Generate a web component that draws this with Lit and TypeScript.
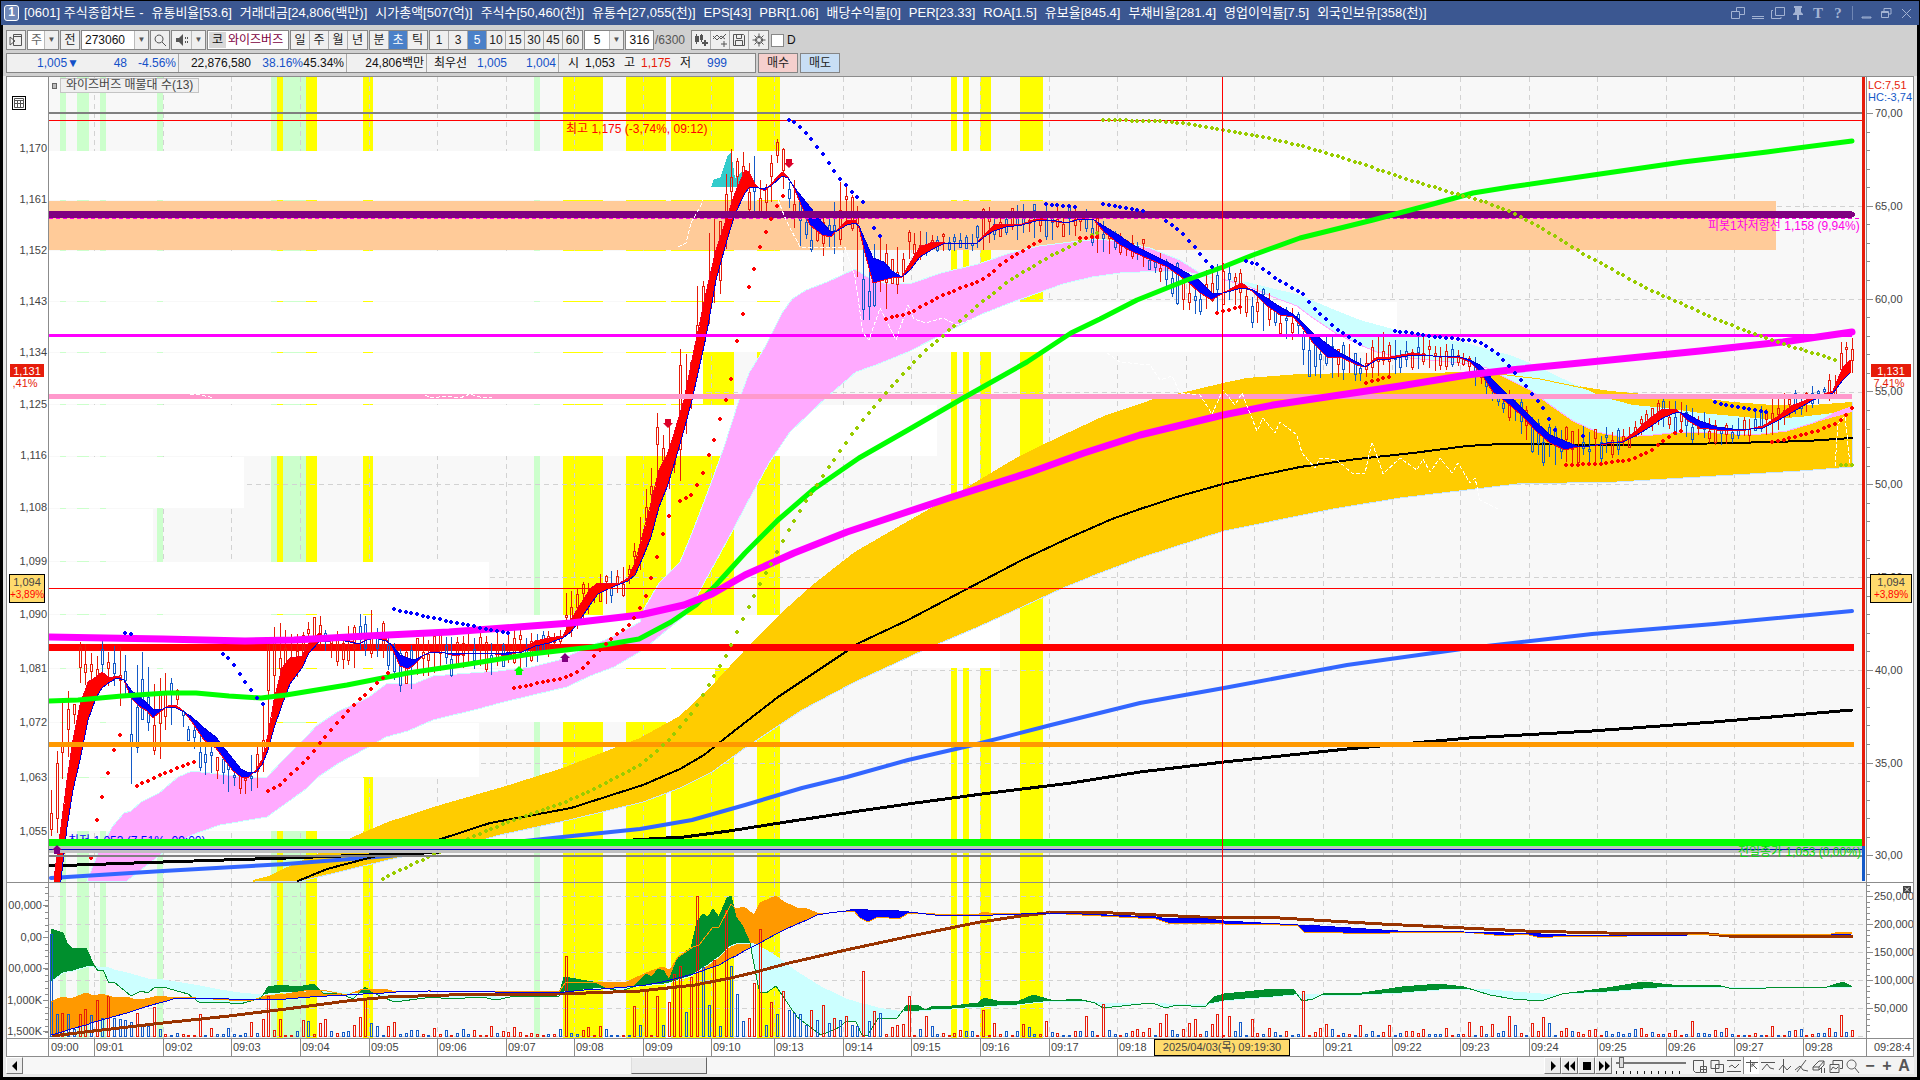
import { LitElement, html, svg, css } from "lit";
import { customElement } from "lit/decorators.js";

type Row = number[];
const rows = (s: string): Row[] => s.trim().split(/\s+/).map((p) => p.split(",").map(Number));
const poly = (s: string) => "M" + s.trim().split(/\s+/).join("L");

/** Linear interpolation of column `c` of a table sorted by its first column. */
const at = (t: Row[], x: number, c = 1): number => {
  if (x <= t[0][0]) return t[0][c];
  for (let i = 1; i < t.length; i++) {
    if (x <= t[i][0]) {
      const a = t[i - 1], b = t[i];
      return a[c] + ((b[c] - a[c]) * (x - a[0])) / (b[0] - a[0] || 1);
    }
  }
  return t[t.length - 1][c];
};

/** Columns where series 1 runs above (sign 1) or below (sign -1) series 2. */
const ribbon = (t: Row[], sign: number): string => {
  let d = "";
  for (let x = Math.ceil(t[0][0]); x <= t[t.length - 1][0]; x++) {
    const a = at(t, x, 1), b = at(t, x, 2);
    if ((b - a) * sign > 0.8) d += `M${x + 0.5},${Math.round(a)}V${Math.round(b)}`;
  }
  return d;
};
const trace = (t: Row[], c: number) => "M" + t.map((r) => `${r[0]},${r[c]}`).join("L");
const noise = (i: number) => {
  const v = Math.sin(i * 127.1 + 11.7) * 43758.5453;
  return v - Math.floor(v);
};

const STEP = 5.718;
const BARS = 316;
const barX = (i: number) => Math.round(51 + i * STEP);

const METRICS = ["[0601] 주식종합차트 -", "유통비율[53.6]", "거래대금[24,806(백만)]", "시가총액[507(억)]", "주식수[50,460(천)]", "유통수[27,055(천)]", "EPS[43]", "PBR[1.06]", "배당수익률[0]", "PER[23.33]", "ROA[1.5]", "유보율[845.4]", "부채비율[281.4]", "영업이익률[7.5]", "외국인보유[358(천)]"];

const GRID_X = [94, 163, 231, 300, 369, 437, 506, 574, 643, 711, 774, 843, 911, 980, 1049, 1117, 1186, 1254, 1323, 1392, 1460, 1529, 1597, 1666, 1734, 1803];
const TIMES = ["09:01", "09:02", "09:03", "09:04", "09:05", "09:06", "09:07", "09:08", "09:09", "09:10", "09:13", "09:14", "09:15", "09:16", "09:17", "09:18", "", "", "09:21", "09:22", "09:23", "09:24", "09:25", "09:26", "09:27", "09:28"];
const GREEN_STRIPES = rows("60,66 77,89 100,106 157,163 271,277 283,306 534,540");
const YELLOW_STRIPES = rows("277,283 306,317 363,373 563,603 626,666 671,734 757,780 951,957 963,969 980,991 1020,1043");
/** top, bottom, right edge of each volume-at-price band */
const PROFILE = rows("151,200,1350 251,301,843 302,352,1397 353,404,703 405,456,937 457,508,244 509,561,153 562,614,489 615,668,1000 669,722,715 723,777,479 778,831,364");
const PRICE_LABELS: [string, number][] = [["1,170", 147], ["1,161", 198], ["1,152", 249], ["1,143", 300], ["1,134", 351], ["1,125", 403], ["1,116", 454], ["1,108", 506], ["1,099", 560], ["1,090", 613], ["1,081", 667], ["1,072", 721], ["1,063", 776], ["1,055", 830]];

const PINK_CLOUD = "87,881 98,853 112,827 124,813 131,811 141,802 159,793 178,777 192,771 245,777 267,777 282,761 308,735 316,726 337,712 369,697 386,684 416,683 433,676 457,674 498,671 531,667 559,660 588,647 612,637 640,622 645,607 659,583 680,562 692,533 702,507 714,475 724,447 739,400 749,373 765,347 782,313 792,299 806,290 827,282 855,269 871,279 884,283 912,283 941,273 978,264 1010,253 1039,246 1071,242 1100,239 1127,243 1150,248 1180,260 1200,273 1213,278 1187,272 1160,271 1120,273 1092,277 1063,284 1010,303 982,314 945,333 908,352 876,365 856,372 827,397 790,432 769,463 745,507 733,530 704,583 688,613 667,630 643,650 614,667 590,676 567,687 533,695 500,703 478,709 433,720 408,731 386,737 367,748 339,763 318,777 306,789 267,817 220,825 192,835 169,848 127,881";
const CYAN_TOP = "1213,278 1247,282 1267,287 1300,295 1330,308 1360,320 1393,329 1427,337 1467,343 1493,351 1510,355 1530,363 1557,376 1583,388 1603,397 1633,405 1667,408 1700,413 1767,419 1800,417 1833,413";
const CYAN_BOTTOM = "1833,415 1813,423 1787,431 1753,435 1717,433 1680,432 1653,435 1623,437 1597,432 1573,421 1553,407 1530,390 1500,375 1487,368 1470,364 1400,357 1377,352 1360,345 1337,334 1313,318 1297,306 1273,297 1250,287 1222,279";
const GOLD_TOP = "253,881 269,877 294,865 322,853 353,838 388,823 437,807 506,787 563,769 604,753 640,739 651,733 680,717 712,687 749,647 786,610 814,585 855,553 912,520 961,492 1018,458 1059,438 1104,417 1157,399 1190,392 1223,384 1247,379 1300,375 1360,374 1433,374 1483,372 1500,376 1540,379 1583,388 1610,392 1643,395 1700,399 1733,403 1773,406 1813,406 1852,403";
const GOLD_BOTTOM = "1852,467 1800,471 1733,475 1617,482 1517,484 1467,490 1400,498 1333,509 1224,531 1140,558 1100,573 1063,588 1022,607 978,627 924,650 855,682 802,710 769,732 745,748 712,772 680,788 643,802 569,820 500,835 482,840 388,860 302,881";
const MA_BLACK = "298,881 327,869 388,853 441,839 490,823 571,808 643,785 680,769 704,755 729,735 778,697 859,643 908,620 965,590 1022,560 1071,537 1112,519 1140,509 1180,496 1223,484 1257,476 1300,467 1357,459 1413,453 1467,446 1500,444 1633,445 1733,443 1807,441 1852,438";
const MA_BLACK_LONG = "49,866 163,862 286,858 424,853 649,839 684,837 729,831 786,822 859,811 908,804 982,794 1071,783 1140,772 1224,762 1347,749 1469,738 1592,731 1714,722 1852,710";
const MA_BLUE = "51,878 163,871 286,864 388,856 543,839 640,829 692,820 745,805 802,788 847,777 908,760 973,745 1051,725 1140,703 1224,688 1347,665 1469,648 1592,634 1714,624 1852,611";
const MA_GREEN = "49,701 78,700 122,696 167,693 196,693 229,696 261,698 286,695 347,685 408,673 469,664 531,654 592,647 639,639 671,622 696,605 716,585 745,553 778,520 814,489 859,458 908,430 965,397 1027,362 1071,333 1100,319 1137,300 1187,280 1223,267 1253,255 1300,238 1373,220 1433,204 1473,193 1510,187 1600,174 1683,162 1767,152 1852,141";
const MA_MAGENTA = "49,637 163,639 245,641 294,640 367,636 449,632 531,626 571,623 640,615 684,605 712,594 745,575 794,553 847,532 892,517 949,498 1031,472 1084,453 1140,435 1223,415 1273,405 1333,396 1400,386 1467,375 1510,370 1600,361 1700,351 1783,342 1852,332";

/** x, fast average, slow average */
const RIBBON = rows(`54,878,930 61,827,880 67,780,827 73,740,790 80,705,760 88,682,720 96,677,698 102,672,688 110,678,682 117,676,678 124,680,680 131,698,690 139,706,697 147,711,703 153,718,709 160,712,710 168,706,707 176,705,708 184,712,712 192,722,717 204,740,728 216,748,737 224,759,748 233,771,759 241,777,769 249,777,773 256,770,772 262,760,765 268,735,750 274,700,728 282,668,705 290,658,684 302,656,668 309,643,653 319,633,642 330,640,641 341,638,640 359,644,644 367,639,640 375,635,638 386,638,641 392,648,645 400,666,655 408,669,658 414,665,660 424,655,655 432,651,652 445,653,653 455,656,653 470,653,653 490,653,653 506,656,653 522,651,652 535,641,646 549,638,643 563,636,638 571,620,632 580,605,620 590,589,605 598,583,594 606,584,590 620,583,584 628,578,581 635,563,575 643,533,557 651,503,537 659,470,507 667,455,487 673,437,468 684,400,430 692,360,400 706,293,337 716,250,280 727,217,240 735,193,214 745,170,193 749,172,188 755,184,187 759,188,188 765,191,188 771,184,186 782,172,176 788,177,178 794,188,187 802,207,197 810,225,207 822,235,222 831,237,232 837,230,231 847,220,225 855,220,223 859,228,226 865,253,240 873,283,258 884,280,262 892,278,271 902,277,277 910,263,270 920,247,257 933,242,249 945,243,243 976,244,244 984,235,237 994,225,231 1006,224,227 1022,224,225 1039,218,220 1051,221,220 1067,223,223 1080,218,219 1094,220,220 1104,232,226 1120,245,236 1133,252,245 1167,267,262 1187,281,273 1200,293,281 1212,300,293 1223,293,293 1242,283,288 1253,292,290 1267,306,298 1280,315,307 1293,317,314 1302,327,322 1313,343,333 1327,357,344 1340,357,353 1357,365,362 1365,367,367 1377,357,360 1390,357,359 1413,353,355 1433,356,356 1460,358,357 1470,362,360 1480,372,365 1493,392,380 1507,403,394 1520,414,406 1537,432,423 1550,443,435 1565,450,441 1577,447,446 1590,446,446 1607,444,443 1623,441,442 1637,430,435 1650,418,427 1663,409,418 1677,410,412 1687,420,414 1700,428,421 1717,430,427 1740,431,430 1763,426,428 1777,417,421 1793,405,412 1813,398,400 1833,391,393 1843,367,380 1850,360,373`);
/** x, highest, lowest of the candles */
const RANGE = rows(`51,780,848 57,737,845 62,688,780 67,690,760 74,690,740 80,640,700 96,633,700 103,635,690 115,633,700 125,635,710 131,650,786 140,640,740 150,668,755 155,672,760 160,670,760 176,675,710 185,715,735 200,720,770 212,735,780 230,755,792 245,765,793 258,743,790 264,690,780 268,627,740 280,620,690 300,635,675 312,615,640 322,615,660 345,625,670 365,609,665 376,609,660 390,627,670 398,650,692 412,640,688 430,630,674 450,633,676 500,630,676 530,628,665 560,627,650 566,584,644 580,573,625 600,572,605 620,568,600 630,562,592 638,515,580 645,458,550 650,480,540 656,408,520 665,430,500 676,405,500 680,346,490 690,340,430 700,262,360 715,215,310 725,170,280 731,119,240 736,147,200 755,155,220 765,190,230 773,145,195 777,136,170 785,147,192 795,180,245 810,210,252 830,215,257 840,180,250 850,188,225 862,215,320 868,255,320 880,232,318 892,240,300 904,250,287 909,218,265 915,228,265 940,232,250 975,232,250 982,205,255 1000,203,240 1030,203,238 1060,203,240 1085,203,232 1095,215,250 1103,218,257 1120,232,256 1140,235,262 1160,252,285 1180,262,312 1200,273,314 1215,262,314 1222,262,305 1235,260,305 1245,275,320 1255,280,332 1270,290,332 1300,312,345 1304,318,377 1320,336,377 1337,335,377 1360,350,386 1370,331,378 1385,331,378 1400,340,372 1420,335,368 1465,346,375 1475,355,385 1500,385,414 1520,393,432 1540,420,465 1570,425,466 1600,425,464 1625,428,450 1640,408,442 1660,396,425 1690,402,442 1720,420,444 1750,415,443 1768,396,438 1790,390,422 1820,382,402 1835,368,400 1840,340,390 1846,335,370 1852,336,372`);

const BLUE_DOTS = ["124,633 131,634", "222,653 233,663 245,682 251,690 262,704", "392,609 457,623 508,633", "788,120 793,121 804,130 822,153 839,178 862,202", "873,226 879,236", "1045,204 1075,207", "1102,204 1143,211", "1165,220 1182,233 1193,245 1211,267", "1245,261 1257,264 1278,280 1302,293 1313,307 1335,328 1360,344", "1393,331 1413,333 1437,337 1478,341 1497,353 1508,365 1520,379 1542,406 1558,435", "1582,436 1583,436", "1713,402 1765,412"];
const RED_DOTS = ["91,858 96,825 102,797 108,773 113,753 119,735", "136,786 165,773 194,762", "267,792 280,785 308,758 331,730 353,706 371,689 388,673", "513,688 539,683 565,678 582,669 598,652 612,638 629,625 639,610 645,599 656,561 662,537 668,516", "679,501 691,495 702,476 713,443 719,422 725,404 731,379 736,345 748,291 759,250 771,219 782,196", "885,319 908,314 943,295 986,278 1002,263 1039,241", "1079,238 1096,237", "1216,313 1239,307", "1365,383 1388,377", "1565,465 1600,464 1633,459 1650,451 1673,434 1680,431", "1770,442 1787,439 1817,431 1837,423 1845,416 1852,408"];
const OLIVE_DOTS = ["382,879 437,853 467,839 506,823 565,802 588,792 640,765 667,742 690,715 702,697 713,678 725,658 742,621 759,586 782,543 793,523 805,503 822,477 845,444 856,429 879,401 902,375 924,352 953,327 982,302 1010,280 1051,256 1084,239 1096,233", "1102,120 1160,121 1180,123 1223,130 1267,138 1303,146 1350,160 1400,177 1457,194 1485,202 1508,211 1525,219 1555,236 1582,253 1617,272 1650,290 1680,303 1713,318 1760,336 1783,344 1810,352 1836,360", "1838,465 1853,465"];
const LAGGING = ["678,247 686,243 691,223 700,207 704,198", "778,200 786,220 800,247 814,248 845,247 855,277 863,333 869,340 880,308 896,340 908,305 914,319 926,323 943,318 957,325 990,312", "1107,353 1120,362 1150,365 1160,380 1172,376 1180,393 1200,395 1212,414 1223,390 1235,405 1242,393 1257,431 1263,418 1275,433 1280,422 1297,435 1302,453 1315,468 1320,458 1337,460 1353,474 1365,473 1372,442 1383,474 1400,458 1417,470 1423,459 1430,472 1440,458 1452,473 1458,463 1470,483 1475,478 1480,500 1500,510", "1835,466 1838,424 1845,416 1850,464", "425,395 432,398 447,396 460,398 470,394 480,397 492,398", "190,395 196,394 210,397 214,398"];

/** x, green line, cyan base */
const POWER = rows(`51,929,982 63,933,973 67,943,972 73,949,971 86,948,967 94,965,966 98,971,967 103,970,967 109,983,968 114,982,970 131,996,974 141,991,977 148,993,979 155,987,979 163,987,980 188,994,984 200,1003,986 220,1002,990 240,1004,993 261,998,995 268,987,994 280,985,993 298,987,992 314,984,990 324,994,991 339,993,992 353,999,993 365,987,993 371,992,993 394,1002,995 433,997,996 449,999,996 482,997,995 496,1000,997 510,997,997 559,996,996 564,977,992 593,982,989 605,988,988 621,991,988 633,987,987 646,974,985 652,977,985 658,969,984 664,971,984 669,980,983 678,957,980 691,948,976 697,922,972 703,914,968 708,917,965 713,909,961 719,917,957 727,898,949 731,896,946 736,917,944 742,925,943 750,943,943 758,985,945 760,992,947 766,993,950 776,986,956 782,995,961 797,1017,972 821,1035,987 840,1027,996 846,1021,999 856,1022,1002 862,1035,1004 868,1035,1005 878,1018,1008 897,1018,1011 907,1005,1011 919,1006,1011 925,1010,1010 931,1007,1010 952,1006,1009 978,1003,1007 984,998,1007 997,1001,1006 1017,1002,1005 1033,995,1003 1054,1001,1001 1078,999,1001 1095,1003,1002 1103,1008,1003 1131,1005,1003 1152,1003,1003 1166,1008,1004 1176,1005,1004 1205,1007,1005 1214,997,1003 1224,994,1001 1245,992,999 1273,989,997 1294,990,995 1302,1001,994 1313,999,994 1325,993,996 1362,993,995 1402,987,993 1439,984,990 1464,987,989 1490,995,990 1513,999,992 1541,1001,994 1562,994,994 1607,988,992 1643,982,989 1672,985,987 1717,985,987 1729,988,987 1766,988,987 1775,987,987 1827,987,987 1843,982,987 1851,986,987`);
/** x, orange line, blue line */
const FLOW = rows(`51,1002,1035 62,997,1032 71,999,1029 86,993,1025 94,996,1022 102,994,1020 112,997,1017 127,997,1013 133,999,1011 145,999,1007 159,996,1003 167,997,1001 176,997,998 196,998,998 229,1000,999 253,1000,999 265,996,999 286,994,999 310,990,997 327,991,996 347,995,995 363,989,994 384,989,993 396,992,992 429,991,991 559,992,993 565,983,992 584,982,990 601,983,989 627,982,987 646,973,985 662,967,982 670,970,980 678,957,978 693,947,974 699,945,972 713,927,967 719,927,965 731,904,958 736,909,956 744,907,951 754,915,946 760,903,943 776,896,934 784,902,930 797,908,924 807,909,920 817,913,915 829,913,913 846,911,911 854,911,909 860,918,909 868,922,910 878,917,910 899,919,911 909,913,912 935,914,915 976,915,915 984,912,915 993,914,915 1050,913,913 1082,915,914 1156,919,917 1168,923,919 1200,923,918 1224,924,921 1280,925,924 1298,926,925 1304,932,925 1382,934,930 1398,932,931 1464,932,932 1504,936,933 1525,934,933 1541,938,934 1566,936,935 1627,936,936 1688,935,935 1831,934,935 1839,932,934 1851,932,934`);
const BROWN = "52,1036 102,1030 163,1023 229,1016 286,1009 347,1001 388,997 449,995 559,994 640,991 695,985 731,978 756,972 789,963 846,950 911,936 980,922 1021,916 1054,912 1091,912 1200,917 1280,918 1382,924 1443,927 1525,931 1607,933 1709,934 1729,936 1853,936";
/** x, height, 1 for a rising bar */
const VOLUME = rows(`51,102,0 57,22,0 62,23,1 68,22,0 73,7,0 80,22,1 86,27,1 92,21,0 97,36,1 103,18,0 109,40,1 114,18,0 120,17,0 125,16,0 131,14,0 137,23,1 143,11,0 149,10,0 154,29,1 160,7,0 200,22,1 212,8,1 229,8,0 251,14,1 263,17,1 268,40,1 280,17,1 302,16,1 308,15,0 320,13,1 326,17,1 354,11,1 360,19,1 365,38,1 371,13,0 377,10,0 388,10,1 394,14,1 434,8,1 491,10,1 514,9,1 565,80,1 588,9,1 600,10,1 606,7,0 633,30,1 640,11,0 645,47,1 657,40,1 662,11,0 668,34,1 674,62,1 680,70,1 685,24,0 691,59,1 697,140,1 703,69,0 708,31,0 713,76,1 719,10,0 726,126,1 731,70,0 737,42,0 742,15,0 748,18,1 754,53,1 760,107,1 766,11,0 771,34,1 777,22,0 783,45,1 788,26,0 794,23,0 800,22,0 806,11,0 811,26,1 817,16,0 823,31,1 828,13,0 834,18,1 840,16,0 846,20,1 851,11,0 857,10,0 862,65,1 868,15,0 874,25,1 880,23,0 891,9,1 897,11,1 903,12,1 909,40,1 925,20,1 931,10,0 982,26,1 994,13,1 1022,12,1 1028,9,0 1046,15,1 1086,20,1 1102,32,1 1148,8,1 1160,13,1 1165,22,1 1188,13,1 1194,17,1 1211,12,1 1217,22,1 1228,20,1 1240,14,0 1251,17,1 1268,8,1 1302,45,1 1319,8,1 1325,12,1 1331,7,0 1359,11,1 1388,11,1 1422,7,1 1445,8,1 1468,14,1 1480,10,1 1491,12,1 1508,20,1 1514,11,0 1531,13,1 1542,19,1 1548,13,0 1565,8,1 1639,8,1 1692,15,1 1725,8,1 1771,10,1 1828,8,1 1839,21,1 1851,6,1`);

const candlePaths = () => {
  const out = ["", ""];
  for (let i = 0; i < BARS; i++) {
    const x = barX(i) + 0.5;
    const r1 = noise(i), r2 = noise(i + 500), r3 = noise(i + 900);
    const hi = at(RANGE, x, 1), lo = at(RANGE, x, 2), span = lo - hi;
    const slope = at(RIBBON, x + 4) - at(RIBBON, x - 8);
    const up = slope < -8 ? 1 : slope > 8 ? (r3 > 0.8 ? 1 : 0) : r3 > 0.5 ? 1 : 0;
    const top = Math.round(hi + span * r1 * r1 * 0.35) + 0.5;
    const bottom = Math.round(lo - span * r2 * r2 * 0.35) + 0.5;
    const len = bottom - top;
    const b0 = Math.round(top + len * noise(i + 77) * 0.6);
    const b1 = Math.round(b0 + Math.max(2, (bottom - b0) * (0.1 + 0.9 * noise(i + 33))));
    out[up] += `M${x},${top}V${b0}M${x},${b1}V${bottom}M${x - 1},${b0 + 0.5}h2V${b1 + 0.5}h-2Z`;
  }
  return out;
};

const volumePaths = () => {
  const out = ["", ""];
  for (let i = 0; i < BARS; i++) {
    const x = barX(i);
    const known = VOLUME.find((v) => Math.abs(v[0] - x) < 3);
    const h = known ? known[1] : Math.round(1 + noise(i + 40) ** 2 * 6);
    const up = known ? known[2] : noise(i + 9) > 0.55 ? 1 : 0;
    out[up] += `M${x - 0.5},${1036.5 - h}h2V1036.5h-2Z`;
  }
  return out;
};

const dots = (list: string[]) => {
  let d = "";
  for (const s of list) {
    const t = rows(s);
    for (let i = 0; i < BARS; i++) {
      const x = barX(i);
      if (x < t[0][0] - 2 || x > t[t.length - 1][0] + 2) continue;
      const y = Math.round(at(t, x));
      d += `M${x - 1},${y - 2}h2v1h1v2h-1v1h-2v-1h-1v-2h1Z`;
    }
  }
  return d;
};

const stripes = (y: number, h: number) => svg`
  ${GREEN_STRIPES.map(([a, b]) => svg`<rect class="s-green" x=${a} y=${y} width=${b - a} height=${h}></rect>`)}
  ${YELLOW_STRIPES.map(([a, b]) => svg`<rect class="s-yellow" x=${a} y=${y} width=${b - a} height=${h}></rect>`)}`;

const arrow = (x: number, y: number, up: boolean, color: string) =>
  svg`<path fill=${color} d=${up
    ? `M${x},${y - 5}l5,5h-2v4h-6v-4h-2Z`
    : `M${x},${y + 5}l5,-5h-2v-4h-6v4h-2Z`}></path>`;

const icon = (d: string, w = 16) => html`<svg class="ico" width=${w} height="16" viewBox="0 0 ${w} 16" aria-hidden="true"><path d=${d}></path></svg>`;

const TITLE_ICONS: [string, string][] = [
  ["창 연결", "M1.5 6.5h8v7h-8zM6.5 6V2.5h8v7H10"],
  ["숨기기", "M2 11.5h12M2 13.5h12"],
  ["복사", "M5.5 2.5h9v8h-9zM3 5.5H1.5v8H11V12"],
];
const WINDOW_ICONS: [string, string][] = [
  ["최소화", "M3 12h9v1h-9z"],
  ["이전 크기", "M2.5 6.5h7v6h-7zM5 6V3.5h7V9H10M2.5 7.5h7"],
  ["닫기", "M3 4l9 9M12 4l-9 9"],
];
const TOOL_ICONS: [string, string][] = [
  ["차트 추가", "M8 14.5H3.5L1.500 12.500V2.500h10V8M8.500 8.500h6v6h-6zM11.500 8.500v6M8.500 11.500h6"],
  ["차트 복사", "M2 2.500h8v8H2zM6.500 6.500h8v8h-8z"],
  ["영역", "M1 2.500h14M1 13.500h14M3 9l3 -2l3 3l4 -4"],
  ["기준선", "M2 4.500h12M6.500 2v12M8 6l5 5M8 6h3M8 6v3"],
  ["수평선", "M1 4.500h14M2 12l5 -6l3 4l4 1"],
  ["수직선", "M6.500 1v14M2 12l4 -5l4 5l4 -4"],
  ["추세선", "M3 14l9 -12M1 12l5 -4l3 4l5 1"],
  ["모두 지우기", "M2 9l6 -6h5l-5 6zM2 9v3h6V9M8 12l5 -5V3M10.500 10v5M13.500 10v5"],
  ["이미지", "M2 6.500h9v8H2zM5 6V2.500h9.500v8H12M3 12l2 -3l3 2l2 -2"],
  ["찾기", "M6.500 2a4.500 4.500 0 1 0 .1 0M10 10l4 5"],
];

@customElement("app-root")
export class AppRoot extends LitElement {
  static styles = css`
    * { box-sizing: border-box; }
    :host {
      display: flex; flex-direction: column; min-height: 100vh; height: 100vh;
      background: #000; color: #111; overflow: hidden;
      font: 12px/16px "Liberation Sans", "Noto Sans CJK KR", sans-serif;
    }
    button, input, select { font: inherit; color: inherit; margin: 0; padding: 0; border-radius: 0; }
    .title {
      display: flex; align-items: center; height: 24px; margin: 1px 1px 0; padding: 0 4px 0 3px; gap: 5px;
      background: #3b5791; color: #fff; flex: none; font-size: 13px;
    }
    .badge { width: 15px; height: 16px; line-height: 13px; border: 1px solid #fff; border-radius: 3px; background: #7088b8; text-align: center; font-weight: bold; font-size: 12px; }
    .caption { flex: 1; display: flex; gap: 8px; white-space: nowrap; margin: 0; font-size: 13px; font-weight: normal; overflow: hidden; }
    .winbtns { display: flex; gap: 4px; align-items: center; }
    .winbtns button { width: 16px; height: 18px; border: 0; background: none; color: #a3b3d3; display: grid; place-items: center; font: bold 15px/18px "Liberation Serif", serif; }
    .winbtns i { width: 1px; height: 14px; background: #6f86b4; margin: 0 2px; }
    .ico path { fill: none; stroke: currentColor; }
    .solid path { fill: currentColor; stroke: none; }
    .body { flex: 1; min-height: 0; display: flex; flex-direction: column; margin: 0 3px 3px; background: #e8e8e8; }
    .bars { background: #d0d0d0; padding: 5px 3px 3px; display: flex; flex-direction: column; gap: 3px; flex: none; }
    .bar { display: flex; height: 20px; gap: 1px; align-items: stretch; }
    .bar button, .group, .field { border: 1px solid #858585; background: #efefef; }
    .bar button { width: 20px; display: grid; place-items: center; line-height: 16px; white-space: nowrap; color: #222; }
    .bar button .ico { color: #555; }
    .group { display: flex; }
    .bar .group button { width: 19px; border: 0; border-right: 1px solid #aaa; }
    .bar .group button:last-child { border-right: 0; }
    .bar .group button[aria-pressed="true"] { background: #4a80c8; color: #fff; }
    .field { display: flex; background: #fff; }
    .field input, .field select { border: 0; background: #fff; min-width: 0; flex: 1; appearance: none; outline: 0; padding-left: 3px; }
    .bar .field .drop { width: 14px; border: 0; border-left: 1px solid #bbb; color: #555; font-size: 8px; }
    .bar .field .voice { width: 19px; border: 0; }
    .w32 { width: 32px; color: #666; } .w68 { width: 68px; } .w40 { width: 40px; } .w29 { width: 29px; }
    .w29 input, .w40 input { text-align: center; padding: 0; }
    .stock { width: 82px; display: flex; border: 1px solid #858585; background: #fff; color: #800040; padding: 1px; white-space: nowrap; overflow: hidden; }
    .stock b { font-weight: normal; background: #d8d8d8; color: #111; width: 17px; text-align: center; margin-right: 2px; flex: none; }
    .muted { color: #555; align-self: center; width: 35px; }
    .check { display: flex; align-items: center; gap: 3px; margin-left: 1px; }
    .check input { appearance: none; width: 13px; height: 13px; border: 1px solid #888; background: #fff; }
    .quote { display: flex; width: 750px; border: 1px solid #858585; background: #f0f0f0; align-items: center; height: 20px; }
    .quote span { text-align: right; white-space: nowrap; flex: none; }
    .quote .end { border-right: 1px solid #aaa; padding-right: 2px; line-height: 18px; }
    .down { color: #1450c8; } .up { color: #e61c0a; }
    .q20 { width: 20px; } .q36 { width: 36px; } .q40 { width: 40px; } .q44 { width: 44px; } .q48 { width: 48px; } .q52 { width: 52px; } .q72 { width: 72px; } .q80 { width: 80px; }
    .bar .buy, .bar .sell { width: 40px; margin-left: 1px; }
    .bar .buy { background: #f5cfcd; } .bar .sell { background: #c8def4; }

    .chart {
      flex: 1; min-height: 0; margin: 0 3px; border: 1px solid #8c8c8c; background: #8c8c8c;
      display: grid; gap: 1px; grid-template-columns: 41px minmax(0, 1fr) 46px;
      grid-template-rows: minmax(0, 805fr) minmax(0, 155fr) 17px;
    }
    .pane { position: relative; background: #f8f8f8; overflow: hidden; min-width: 0; min-height: 0; }
    .axis { background: #fff; }
    .pane > svg { display: block; width: 100%; height: 100%; }
    .legend { position: absolute; left: 3px; top: 1px; display: flex; align-items: center; gap: 3px; }
    .legend i { width: 5px; height: 6px; border: 1px solid #666; background: #bbb; }
    .legend span { border: 1px solid #c4c4c4; background: #f0f0f0; color: #444; line-height: 13px; padding: 0 5px; height: 15px; white-space: nowrap; }
    .gridicon { position: absolute; left: 5px; top: 19px; width: 14px; height: 14px; padding: 0; border: 1px solid #000; background: #fff; display: grid; place-items: center; }
    text { font-size: 12px; fill: #444; }
    .axis text { font-size: 11px; }
    .grid { stroke: #d2d2d2; fill: none; stroke-dasharray: 5 4; }
    .tick { stroke: #8c8c8c; }
    .s-green { fill: #ccffcc; } .s-yellow { fill: #ffff00; }
    .crisp { shape-rendering: crispEdges; }
    .line { fill: none; stroke-linejoin: round; stroke-linecap: round; }

    .foot { display: flex; align-items: stretch; height: 17px; margin: 0 3px 3px; background: #f3f3f3; flex: none; }
    .foot button { width: 17px; border: 1px solid #777; border-top-color: #fff; border-left-color: #fff; background: #ececec; display: grid; place-items: center; color: #000; }
    .track { flex: 1; display: flex; background: #f7f7f7; }
    .thumb { width: 76px; margin-left: 40%; border: 1px solid #666; border-top-color: #fff; border-left-color: #ddd; background: #ececec; }
    .speed { width: 70px; margin: 0 6px 0 4px; display: flex; flex-direction: column; justify-content: space-between; }
    .speed input { appearance: none; width: 100%; height: 11px; margin: 0; background: linear-gradient(#777, #777) center / 100% 2px no-repeat; }
    .speed input::-webkit-slider-thumb { appearance: none; width: 5px; height: 11px; background: #ddd; border: 1px solid #666; }
    .speed i { height: 3px; background: repeating-linear-gradient(90deg, #222 0 1px, transparent 1px 7px); }
    .foot .tools { display: flex; gap: 1px; padding-right: 2px; }
    .foot .tools button { width: 16px; border: 0; background: none; color: #555; font: bold 16px/16px "Liberation Sans", sans-serif; }
    .foot .tools button.on { background: #fff; border-left: 1px solid #888; }
  `;

  private mainPlot() {
    const [down, up] = candlePaths();
    return svg`
      <g class="crisp">
        ${stripes(77, 805)}
        ${GRID_X.map((x) => svg`<path class="grid" d="M${x + 0.5},77V882"></path>`)}
        ${[206, 299, 392, 484, 577, 670, 763, 856].map((y) => svg`<path class="grid" d="M49,${y + 0.5}H1866"></path>`)}
        ${PROFILE.map(([t, b, r]) => svg`<rect x="49" y=${t} width=${r - 49} height=${b - t} fill="#fff"></rect>`)}
        <rect x="49" y="201" width="1727" height="49" fill="#ffcb99"></rect>
        <path fill="#ffcc00" stroke="#c8e4ff" stroke-width="1" d=${poly(GOLD_TOP + " " + GOLD_BOTTOM) + "Z"}></path>
        <path fill="none" stroke="#ffcc00" stroke-width="2" d=${poly(GOLD_TOP)}></path>
        <path fill="#33cccc" d="M711,187L714,179L720,178L728,155L731,152L735,178L742,172L749,187Z"></path>
        <path fill="#ffaaff" stroke="#ccffff" d=${poly(PINK_CLOUD) + "Z"}></path>
        <path fill="#ccffff" d=${poly(CYAN_TOP + " " + CYAN_BOTTOM) + "Z"}></path>
        <path fill="none" stroke="#ffaaff" stroke-width="1" d=${poly(CYAN_BOTTOM)}></path>
        <path fill="none" stroke="#ffcc00" d="M1490,373L1540,379L1583,388L1603,394"></path>
        <path fill="#ffaaff" d="M1833,413L1852,406V412L1820,421Z"></path>
        <path d="M49,113H1862" stroke="#808080" stroke-width="2"></path>
        <path d="M49,120.500H1862" stroke="#ff0000"></path>
      </g>
      <path class="line" d=${poly(MA_BLUE)} stroke="#3366ff" stroke-width="4"></path>
      <path class="line crisp" d=${poly(MA_BLACK_LONG)} stroke="#000" stroke-width="3"></path>
      <path class="line crisp" d=${poly(MA_BLACK)} stroke="#000" stroke-width="2"></path>
      <g class="crisp">
        <path d="M49,647.500H1854" stroke="#ff0000" stroke-width="7"></path>
        <path d=${up} fill="none" stroke="#e61c0a"></path>
        <path d=${down} fill="none" stroke="#145ac8"></path>
        <path d=${ribbon(RIBBON, 1)} stroke="#ff0000"></path>
        <path d=${ribbon(RIBBON, -1)} stroke="#0000ff"></path>
        <path d=${trace(RIBBON, 1)} fill="none" stroke="#f00020"></path>
        <path d=${trace(RIBBON, 2)} fill="none" stroke="#0000d8"></path>
        <path d="M49,744.500H1854" stroke="#ff9900" stroke-width="5"></path>
        <path d="M49,214.500H1852" stroke="#800080" stroke-width="7"></path>
        <path d="M49,218.500H1862" stroke="#ff00e6" stroke-dasharray="4 3"></path>
        <path d="M49,335.500H1852" stroke="#ff00ff" stroke-width="3"></path>
        <path d="M49,396.500H1852" stroke="#ff99cc" stroke-width="5"></path>
        <circle cx="1852" cy="214.500" r="3" fill="#800080"></circle>
      </g>
      <path class="line" d=${poly(MA_GREEN)} stroke="#00ff00" stroke-width="5"></path>
      <path class="line" d=${poly(MA_MAGENTA)} stroke="#ff00ff" stroke-width="7"></path>
      <g class="crisp">
        ${LAGGING.map((s) => svg`<path d=${poly(s)} fill="none" stroke="#fff" stroke-dasharray="4 2"></path>`)}
        <path d=${dots(OLIVE_DOTS)} fill="#99cc00"></path>
        <path d=${dots(BLUE_DOTS)} fill="#0000ff"></path>
        <path d=${dots(RED_DOTS)} fill="#ff0000"></path>
      </g>
      <text x="68" y="845" style="fill:#0000ff">최저 1,053 (7,51%, 09:00)</text>
      <g class="crisp">
        <rect x="49" y="846" width="1813" height="7" fill="#c0c0c0"></rect>
        <path d="M49,849.500H1862" stroke="#0000c0"></path>
        <path d="M49,856H1862" stroke="#808080" stroke-width="2"></path>
        <rect x="49" y="839" width="1813" height="7" fill="#00ff00"></rect>
        <rect x="1862" y="77" width="3" height="769" fill="#e61c0a"></rect>
        <rect x="1862" y="846" width="3" height="35" fill="#145ac8"></rect>
      </g>
      ${arrow(57, 850, true, "#800080")} ${arrow(565, 658, true, "#800080")} ${arrow(519, 671, true, "#00ff00")}
      ${arrow(789, 163, false, "#dc0028")} ${arrow(668, 423, false, "#dc0028")}
      <text x="566" y="133" style="fill:#ff0000">최고 1,175 (-3,74%, 09:12)</text>
      <text x="1708" y="230" style="fill:#ff00e6">피봇1차저항선 1,158 (9,94%)</text>
      <text x="1738" y="856" style="fill:#00d800">전일종가 1,053 (0,00%)</text>
      <g class="crisp" stroke="#ff0000"><path d="M49,588.500H1862M1222.500,77V882"></path></g>`;
  }

  private lowerPlot() {
    const [down, up] = volumePaths();
    return svg`
      <g class="crisp">
        ${stripes(883, 155)}
        ${GRID_X.map((x) => svg`<path class="grid" d="M${x + 0.5},883V1038"></path>`)}
        ${[896, 924, 952, 980, 1008, 1036].map((y) => svg`<path class="grid" d="M49,${y + 0.5}H1866"></path>`)}
        <path d=${ribbon(FLOW, 1)} stroke="#ff9900"></path>
        <path d=${ribbon(FLOW, -1)} stroke="#0000ff"></path>
        <path d=${ribbon(POWER, 1)} stroke="#008f2d"></path>
        <path d=${ribbon(POWER, -1)} stroke="#ccffff"></path>
        <path d=${trace(POWER, 2)} fill="none" stroke="#ccffff"></path>
        <path d=${trace(POWER, 1)} fill="none" stroke="#008f2d"></path>
        <path d=${up} fill="none" stroke="#e61c0a"></path>
        <path d=${down} fill="none" stroke="#145ac8"></path>
        <path d=${poly(BROWN)} fill="none" stroke="#993300" stroke-width="3"></path>
        <path d=${trace(FLOW, 1)} fill="none" stroke="#ff9900"></path>
        <path d=${trace(FLOW, 2)} fill="none" stroke="#0000e0"></path>
        <path d="M1222.500,883V1038" stroke="#ff0000"></path>
      </g>`;
  }

  private priceTags(x: number, w: number, pct: string) {
    return svg`
      <rect class="crisp" x=${x + 1} y="364" width=${w - 2} height="13" fill="#e61c0a"></rect>
      <text x=${x + w / 2} y="375" text-anchor="middle" style="fill:#fff">1,131</text>
      <text x=${x + w / 2 - 2} y="387" text-anchor="middle" style="fill:#e61c0a">${pct}</text>
      <rect class="crisp" x=${x + 0.5} y="574.500" width=${w - 1} height="28" fill="#ffdb6d" stroke="#000"></rect>
      <text x=${x + w / 2} y="586" text-anchor="middle">1,094</text>
      <text x=${x + w / 2} y="598" text-anchor="middle" style="fill:#ff0000;font-size:10px">+3,89%</text>`;
  }

  private chart() {
    const minor = (x: number, from: number, to: number, step: number) => {
      let d = "";
      for (let y = from; y < to; y += step) d += `M${x},${Math.round(y) + 0.5}h3`;
      return svg`<path class="tick crisp" d=${d}></path>`;
    };
    return html`<main class="chart" id="chart">
      <div class="pane axis">
        <svg viewBox="7 77 41 805" preserveAspectRatio="none">
          ${PRICE_LABELS.map(([t, y]) => svg`<text x="47" y=${y + 5} text-anchor="end">${t}</text>`)}
          ${this.priceTags(9, 36, ",41%")}
        </svg>
        <button class="gridicon" aria-label="표 보기"><svg width="10" height="10" viewBox="0 0 10 10"><path d="M.5 .5h9v9h-9zM.5 2.500h9M.5 5.500h9M3.500 2.500v7M6.500 2.500v7" fill="none" stroke="#555"></path></svg></button>
      </div>
      <div class="pane">
        <svg viewBox="49 77 1817 805" preserveAspectRatio="none">${this.mainPlot()}</svg>
        <div class="legend"><i></i><span>와이즈버즈 매물대 수(13)</span></div>
      </div>
      <div class="pane axis">
        <svg viewBox="1867 77 46 805" preserveAspectRatio="none">
          ${minor(1867, 113, 880, 18.56)}
          ${[70, 65, 60, 55, 50, 45, 40, 35, 30].map((v, i) => {
            const y = Math.round(113 + i * 92.8);
            return svg`<path class="tick crisp" d="M1867,${y + 0.5}h6"></path><text x="1875" y=${y + 4}>${v},00</text>`;
          })}
          <text x="1868" y="89" style="fill:#e61c0a">LC:7,51</text>
          <text x="1868" y="101" style="fill:#145ac8">HC:-3,74</text>
          ${this.priceTags(1870, 42, "7,41%")}
        </svg>
      </div>
      <div class="pane axis">
        <svg viewBox="7 883 41 155" preserveAspectRatio="none">
          ${minor(45, 887, 1036, 6.3)}
          ${([["00,000", 905], ["0,00", 937], ["00,000", 968], ["1,000K", 1000], ["1,500K", 1031]] as [string, number][]).map(
            ([t, y]) => svg`<path class="tick crisp" d="M43,${y + 0.5}h5"></path><text x="42" y=${y + 4} text-anchor="end">${t}</text>`)}
        </svg>
      </div>
      <div class="pane"><svg viewBox="49 883 1817 155" preserveAspectRatio="none">${this.lowerPlot()}</svg></div>
      <div class="pane axis">
        <svg viewBox="1867 883 46 155" preserveAspectRatio="none">
          ${minor(1867, 885, 1036, 5.6)}
          ${[250, 200, 150, 100, 50].map((v, i) => svg`<path class="tick crisp" d="M1867,${896.5 + i * 28}h6"></path><text x="1874" y=${900 + i * 28}>${v},000</text>`)}
          <rect x="1903" y="886" width="8" height="7" fill="#444"></rect><path d="M1905,887.500l4,4m0,-4l-4,4" stroke="#fff"></path>
        </svg>
      </div>
      <div class="pane axis"></div>
      <div class="pane axis">
        <svg viewBox="49 1039 1817 17" preserveAspectRatio="none">
          <text x="51" y="1051">09:00</text>
          ${GRID_X.map((x, i) => svg`<path class="tick crisp" d="M${x + 0.5},1039v17"></path><text x=${x + 2} y="1051">${TIMES[i]}</text>`)}
          <rect class="crisp" x="1154.500" y="1039.500" width="135" height="16" fill="#ffdb6d" stroke="#000"></rect>
          <text x="1222" y="1051" text-anchor="middle">2025/04/03(목) 09:19:30</text>
        </svg>
      </div>
      <div class="pane axis"><svg viewBox="1867 1039 46 17" preserveAspectRatio="none"><text x="1874" y="1051">09:28:4</text></svg></div>
    </main>`;
  }

  render() {
    const group = (items: string[], on = "") => html`<div class="group">${items.map((t) => html`<button aria-pressed=${t === on}>${t}</button>`)}</div>`;
    return html`
      <header class="title">
        <span class="badge">1</span>
        <h1 class="caption">${METRICS.map((m) => html`<span>${m}</span>`)}</h1>
        <div class="winbtns">
          ${TITLE_ICONS.map(([n, d]) => html`<button aria-label=${n}>${icon(d)}</button>`)}
          <button class="solid" aria-label="고정">${icon("M4 1h8v2h-1v4l2 2v1H9v5H7v-5H3V9l2-2V3H4z")}</button>
          <button>T</button><button>?</button><i></i>
          ${WINDOW_ICONS.map(([n, d]) => html`<button aria-label=${n}>${icon(d)}</button>`)}
        </div>
      </header>
      <div class="body">
        <div class="bars">
          <div class="bar">
            <button aria-label="메뉴">${icon("M5.500 2.500h8v11h-8zM5 4.500h8M2 5l5 4l-5 4z")}</button>
            <label class="field w32"><select aria-label="구분"><option>주</option></select><button class="drop" tabindex="-1" aria-label="구분 펼치기">▼</button></label>
            <button>전</button>
            <label class="field w68"><input aria-label="종목코드" value="273060"><button class="drop" aria-label="종목 펼치기">▼</button></label>
            <button aria-label="찾기">${icon("M7 3a4 4 0 1 0 .1 0M10 10l4 4")}</button>
            <div class="field"><button class="voice solid" aria-label="음성">${icon("M1 6h3l4-4v12l-4-4H1zM10 5h1v2h-1zM10 9h1v2h-1zM12 5h1v2h-1zM12 9h1v2h-1z", 14)}</button><button class="drop" aria-label="음성 펼치기">▼</button></div>
            <div class="stock"><b>코</b>와이즈버즈</div>
            ${group(["일", "주", "월", "년"])}
            ${group(["분", "초", "틱"], "초")}
            ${group(["1", "3", "5", "10", "15", "30", "45", "60"], "5")}
            <label class="field w40"><input aria-label="주기" value="5"><button class="drop" aria-label="주기 펼치기">▼</button></label>
            <label class="field w29"><input aria-label="봉 개수" value="316"></label>
            <span class="muted">/6300</span>
            <div class="group">
              <button class="solid" aria-label="지표 추가">${icon("M2 4h4v6H2zM3 2h1v10H3zM7 3h3v5H7zM8 2h1v8H8zM11 8h2v2h2v2h-2v2h-2v-2H9v-2h2z")}</button>
              <button aria-label="비교 추가">${icon("M1 7l4-4l4 4l5-5M1 4l4 4l4-4l4 3M12 9v6M9 12h6")}</button>
              <button aria-label="저장">${icon("M2.500 2.500h10l1 1v10h-11zM5.500 2.500v4h5v-4M4.500 13.500v-5h7v5")}</button>
              <button aria-label="설정">${icon("M8 4.500a3.500 3.500 0 1 0 .1 0M8 5.500a2.500 2.500 0 1 0 .1 0M8 1.500v3M8 11.500v3M1.500 8h3M11.500 8h3M3.500 3.500l2 2M10.500 10.500l2 2M12.500 3.500l-2 2M5.500 10.500l-2 2")}</button>
            </div>
            <label class="check"><input type="checkbox">D</label>
          </div>
          <div class="bar">
            <div class="quote">
              <span class="q72 down">1,005▼</span><span class="q48 down">48</span><span class="q52 down end">-4.56%</span>
              <span class="q72">22,876,580</span><span class="q52 down">38.16%</span><span class="q44 end">45.34%</span><span class="q80 end">24,806백만</span>
              <span class="q40">최우선</span><span class="q40 down">1,005</span><span class="q52 down end">1,004</span>
              <span class="q20">시</span><span class="q36">1,053</span><span class="q20">고</span><span class="q36 up">1,175</span><span class="q20">저</span><span class="q36 down">999</span>
            </div>
            <button class="buy">매수</button><button class="sell">매도</button>
          </div>
        </div>
        ${this.chart()}
        <footer class="foot">
          <button class="solid" aria-label="왼쪽으로">${icon("M10 3v10l-5-5z")}</button>
          <div class="track" role="scrollbar" aria-label="시간 이동" aria-controls="chart" aria-valuenow="40"><div class="thumb"></div></div>
          <button class="solid" aria-label="재생">${icon("M6 3v10l5-5z")}</button>
          <button class="solid" aria-label="뒤로">${icon("M7 3v10L2 8zM13 3v10L8 8z")}</button>
          <button class="solid" aria-label="정지">${icon("M4 4h8v8H4z")}</button>
          <button class="solid" aria-label="앞으로">${icon("M3 3v10l5-5zM9 3v10l5-5z")}</button>
          <div class="speed"><input type="range" aria-label="속도" value="5"><i></i></div>
          <div class="tools">
            ${TOOL_ICONS.map(([n, d], i) => html`<button class=${i === 3 ? "on" : ""} aria-label=${n}>${icon(d)}</button>`)}
            <button>−</button><button>+</button><button>A</button>
          </div>
        </footer>
      </div>`;
  }
}
